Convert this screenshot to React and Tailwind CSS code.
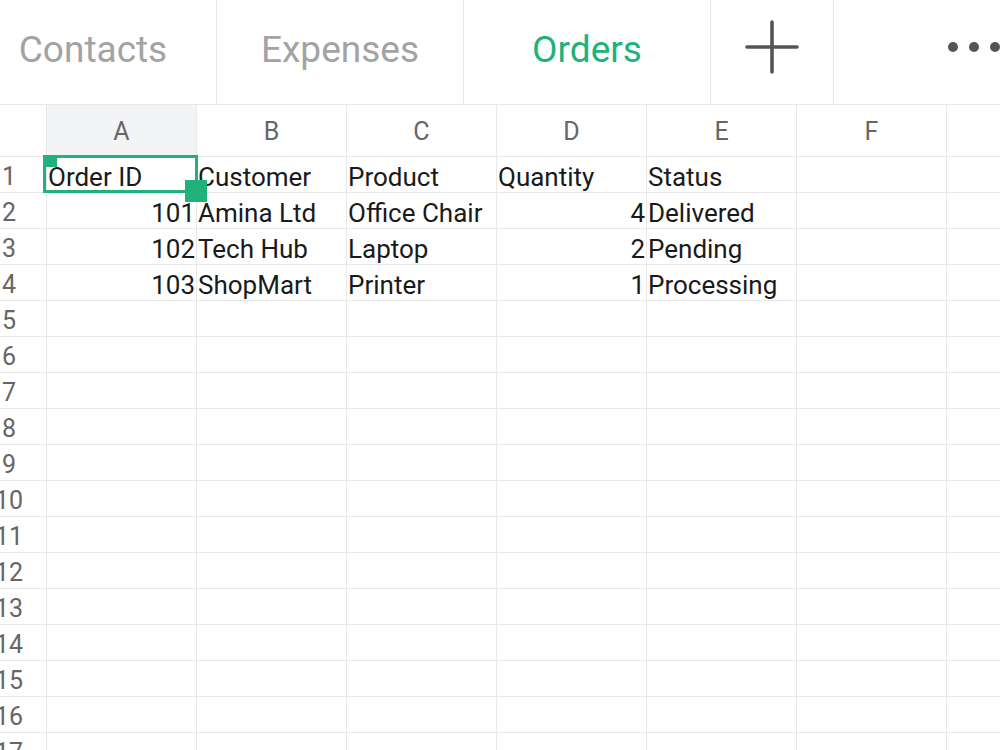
import React from 'react';

const columns = ['A', 'B', 'C', 'D', 'E', 'F', 'G'];

const data = [
    ['Order ID', 'Customer', 'Product', 'Quantity', 'Status'],
    [101, 'Amina Ltd', 'Office Chair', 4, 'Delivered'],
    [102, 'Tech Hub', 'Laptop', 2, 'Pending'],
    [103, 'ShopMart', 'Printer', 1, 'Processing'],
];

const rowCount = 18;

function Tab({ label, active }) {
    return (
        <div className="w-[247px] shrink-0 h-full flex items-center justify-center border-r border-[#e8e8e8] pb-[4px]">
            <span className={active ? 'text-[37px] text-[#20b27a]' : 'text-[37px] text-[#a3a3a3]'}>{label}</span>
        </div>
    );
}

function Cell({ value, row, col }) {
    const isNumber = typeof value === 'number';
    const selected = row === 0 && col === 0;
    return (
        <div className="relative w-[150px] shrink-0 h-[36px] border-r border-b border-[#e8e8e8] pt-[5px]">
            {value !== undefined && (
                <div className={`leading-[30px] text-[26px] text-[#1a1a1a] whitespace-nowrap px-[1px] ${isNumber ? 'text-right' : 'text-left'}`}>
                    {value}
                </div>
            )}
            {selected && (
                <>
                    <div className="absolute left-[-4px] top-[-2px] w-[155px] h-[38px] border-[3px] border-[#20b27a]" />
                    <div className="absolute left-[-4px] top-[-2px] w-[14px] h-[12px] bg-[#20b27a]" />
                    <div className="absolute left-[138px] top-[23px] w-[22px] h-[22px] bg-[#20b27a] z-10" />
                </>
            )}
        </div>
    );
}

export default function App() {
    return (
        <div className="w-[1000px] h-[750px] overflow-hidden bg-white font-['Roboto',sans-serif]">
            {/* Sheet tabs */}
            <div className="h-[105px] border-b border-[#e8e8e8] overflow-hidden">
                <div className="flex h-full ml-[-30px]">
                    <Tab label="Contacts" />
                    <Tab label="Expenses" />
                    <Tab label="Orders" active />
                    <div className="w-[123px] shrink-0 h-full flex items-center justify-center border-r border-[#e8e8e8] pb-[10px]">
                        <svg width="54" height="54" viewBox="0 0 54 54">
                            <path d="M27 2 V52 M2 27 H52" stroke="#555" strokeWidth="3.6" strokeLinecap="round" />
                        </svg>
                    </div>
                    <div className="w-[240px] shrink-0 h-full flex items-center gap-[11px] pb-[10px] pl-[114px]">
                        <span className="w-[10px] h-[10px] shrink-0 rounded-full bg-[#555]" />
                        <span className="w-[10px] h-[10px] shrink-0 rounded-full bg-[#555]" />
                        <span className="w-[10px] h-[10px] shrink-0 rounded-full bg-[#555]" />
                    </div>
                </div>
            </div>

            {/* Column header */}
            <div className="flex h-[52px] border-b border-[#e8e8e8]">
                <div className="w-[47px] shrink-0 border-r border-[#e8e8e8]" />
                {columns.map((c, i) => (
                    <div
                        key={c}
                        className={`w-[150px] shrink-0 flex items-center justify-center pt-[2px] border-r border-[#e8e8e8] text-[25px] text-[#666] ${i === 0 ? 'bg-[#f3f4f6]' : 'bg-white'}`}
                    >
                        {c}
                    </div>
                ))}
            </div>

            {/* Rows */}
            {Array.from({ length: rowCount }).map((_, r) => (
                <div key={r} className="flex">
                    <div className="w-[47px] shrink-0 h-[36px] border-r border-b border-[#e8e8e8] overflow-hidden pt-[5px]">
                        <div className="w-[72px] ml-[-27px] text-center leading-[30px] text-[25px] text-[#666]">{r + 1}</div>
                    </div>
                    {columns.map((c, ci) => (
                        <Cell key={c} value={data[r] ? data[r][ci] : undefined} row={r} col={ci} />
                    ))}
                </div>
            ))}
        </div>
    );
}
